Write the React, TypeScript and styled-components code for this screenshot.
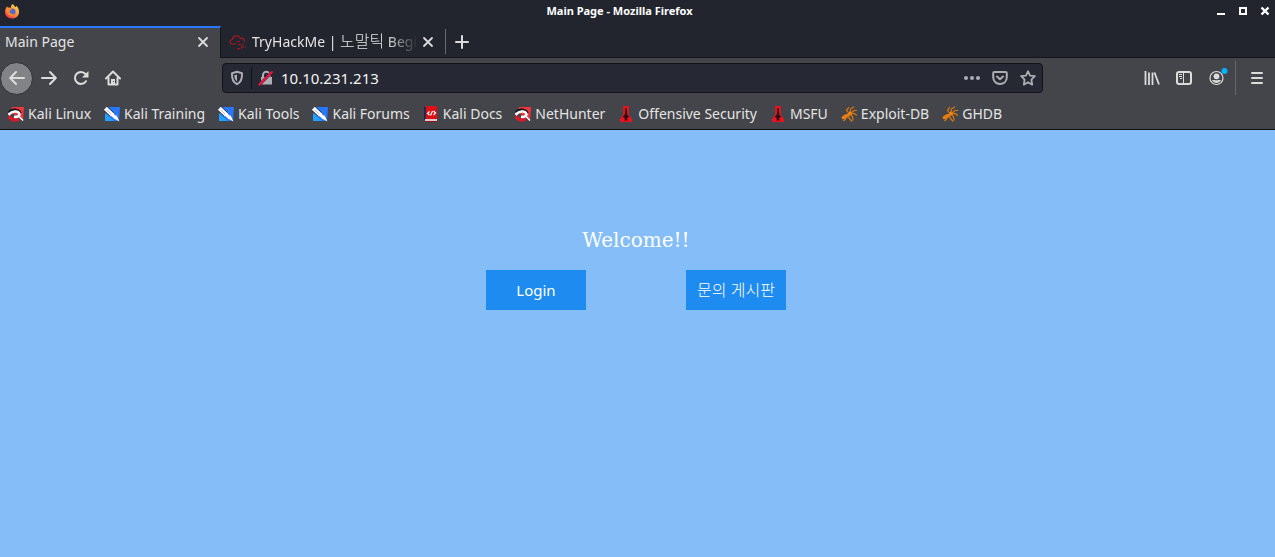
import React from 'react';
import styled, { createGlobalStyle } from 'styled-components';

const Global = createGlobalStyle`
  * { box-sizing: border-box; }
  html, body, #root { height: 100%; }
  body { margin: 0; background: #84bdf7; font-family: 'Noto Sans', 'Noto Sans CJK KR', sans-serif; }
  button, input { font-family: inherit; margin: 0; padding: 0; border: 0; background: none; color: inherit; }
  svg { display: block; flex: none; }
`;

const Window = styled.div`
  min-height: 100%;
  display: flex;
  flex-direction: column;
  color: #e4e4e2;
  font-size: 14px;
  line-height: 20px;
`;

const TitleBar = styled.header`
  height: 25px;
  display: flex;
  align-items: center;
  padding: 0 2px 3px 4px;
  background: #23252e;
`;

const Title = styled.h1`
  flex: 1;
  margin: 0;
  padding-left: 6px;
  text-align: center;
  font-size: 11px;
  line-height: 16px;
  font-weight: 700;
  color: #ffffff;
`;

const WindowControls = styled.div`
  display: flex;
  gap: 6px;
`;

const IconButton = styled.button<{ $size?: number }>`
  width: ${(p) => p.$size ?? 16}px;
  height: ${(p) => p.$size ?? 16}px;
  flex: none;
  display: grid;
  place-items: center;
`;

const TabStrip = styled.div`
  display: flex;
  height: 33px;
  padding-top: 1px;
  background: #23252e;
  border-bottom: 1px solid #14151a;
`;

const Tab = styled.div<{ $active?: boolean }>`
  display: flex;
  align-items: center;
  width: ${(p) => (p.$active ? 221 : 224)}px;
  flex: none;
  padding: 0 9px 2px ${(p) => (p.$active ? 5 : 8)}px;
  border-top: 2px solid ${(p) => (p.$active ? '#2777ff' : 'transparent')};
  border-right: ${(p) => (p.$active ? '1px solid #14151a' : '0')};
  background: ${(p) => (p.$active ? '#43454b' : 'transparent')};
  margin-bottom: ${(p) => (p.$active ? -1 : 0)}px;
`;

const TabLabel = styled.span<{ $faded?: boolean }>`
  flex: 1;
  min-width: 0;
  overflow: hidden;
  white-space: nowrap;
  margin-left: ${(p) => (p.$faded ? 6 : 0)}px;
  margin-right: ${(p) => (p.$faded ? 2 : 0)}px;
  mask-image: ${(p) => (p.$faded ? 'linear-gradient(to left, transparent, #000 32px)' : 'none')};
`;

const Hangul = styled.span`
  font-size: 16px;
  font-weight: 300;
`;

const NewTab = styled.div`
  display: flex;
  align-items: center;
  padding-left: 8px;
  margin: 3px 0;
  border-left: 1px solid #66686e;
`;

const Toolbar = styled.nav`
  height: 40px;
  display: flex;
  align-items: center;
  background: #43454b;
  padding-right: 10px;
`;

const NavButtons = styled.div`
  flex: none;
  display: flex;
  align-items: center;
  width: 222px;
  gap: 16px;
`;

const BackButton = styled(IconButton)`
  width: 33px;
  height: 33px;
  border-radius: 50%;
  background: #828386;
  border: 1px solid #2f3137;
  margin-right: -8px;
`;

const AddressBar = styled.div`
  flex: 1;
  max-width: 821px;
  height: 30px;
  display: flex;
  align-items: center;
  padding: 0 6px;
  border: 1px solid #121318;
  border-radius: 4px;
  background: #262833;
`;

const Divider = styled.span<{ $tone: string; $height: number }>`
  width: 1px;
  height: ${(p) => p.$height}px;
  background: ${(p) => p.$tone};
`;

const Address = styled.input`
  flex: 1;
  min-width: 0;
  font-size: 15px;
  line-height: 20px;
  color: #f4f4f4;
  outline: none;
`;

const AddressGroup = styled.div`
  display: flex;
  align-items: center;
  gap: 6px;
  margin-right: 7px;
`;

const AddressActions = styled.div`
  display: flex;
  gap: 12px;
`;

const ToolActions = styled.div`
  display: flex;
  align-items: center;
  gap: 16px;
  margin-left: auto;
`;

const MenuArea = styled.div`
  display: flex;
  align-items: center;
  gap: 13px;
  margin-left: -9px;
`;

const Bookmarks = styled.div`
  height: 32px;
  display: flex;
  align-items: center;
  gap: 13px;
  padding-left: 8px;
  background: #43454b;
  border-bottom: 1px solid #0f1014;
`;

const Bookmark = styled.a`
  display: flex;
  align-items: center;
  gap: 4px;
  color: inherit;
  text-decoration: none;
  white-space: nowrap;
`;

const Page = styled.main`
  flex: 1;
  display: flex;
  flex-direction: column;
  align-items: center;
  gap: 18px;
  padding: 98px 3px 0 0;
  background: #84bdf7;
  color: #ffffff;
`;

const Welcome = styled.p`
  margin: 0;
  font-family: 'DejaVu Serif', serif;
  font-size: 20px;
  line-height: 24px;
`;

const Choices = styled.div`
  display: flex;
  gap: 100px;
`;

const Choice = styled.button`
  width: 100px;
  height: 40px;
  && { background: #1e8bf0; }
  font-size: 15px;
  line-height: 20px;
  white-space: nowrap;
`;

const Svg = ({ children, w = 16, h = 16 }: { children: React.ReactNode; w?: number; h?: number }) => (
  <svg width={w} height={h} viewBox={`0 0 ${w} ${h}`} fill="none" aria-hidden="true">
    {children}
  </svg>
);

const line = { stroke: '#dcdcdb', strokeWidth: 2, strokeLinecap: 'round', strokeLinejoin: 'round' } as const;
const soft = { ...line, stroke: '#adaeb3' } as const;

const CloseIcon = () => <Svg><path {...line} strokeWidth={1.8} d="M4 4l8 8M12 4l-8 8" /></Svg>;

const FirefoxIcon = () => (
  <Svg>
    <defs>
      <linearGradient id="flame" x1="13" y1="1" x2="3" y2="15" gradientUnits="userSpaceOnUse">
        <stop offset="0" stopColor="#ffe04b" />
        <stop offset=".5" stopColor="#ff9433" />
        <stop offset="1" stopColor="#f52e4f" />
      </linearGradient>
    </defs>
    <path fill="url(#flame)" d="M8.3 1c1.6.8 2.4 2 2.8 3 .7.1 1.2-.4 1.2-1.2C14.500 4.700 15 7 15 9c0 4-3 6.500-6.800 6.500C4 15.500 1 12.600 1 9c0-2.200.7-4.300 2.300-5.800 0 .7.300 1.200.700 1.500C5.200 4.500 6 4.500 7 5c0-1.500.3-3 1.300-4z" />
    <circle cx="8.2" cy="8.800" r="3.300" fill="#5366d6" />
    <path fill="#ff8a2a" d="M2.500 6.500C4 5.200 5.800 5 7.800 6.300c-.2 1-1.200 1.100-2.200 1.300-.2 2.800 2 4.200 4.600 3.200-1 1.800-3.200 2.200-5 1.200C3.200 11 2.200 9 2.500 6.500z" />
  </Svg>
);

const CloudIcon = () => (
  <Svg w={17}>
    <path stroke="#a71920" strokeWidth="1.200" d="M7 10H3.500C.3 9.600.3 5.800 3.300 5.500 4 1 10 .5 11.300 4.300c3-.5 4.700 1.200 4.200 3.700M7.500 7.500H11" />
    <path stroke="#8e1a20" strokeWidth="1.500" strokeDasharray="3 1" d="M9 10.500h6M12 13h5M8 14.700h5" />
  </Svg>
);

const Magnet = () => (
  <Svg>
    <path fill="#f2353d" d="M4 1h12l-1 13-4-3L2 6z" />
    <path stroke="#17181c" strokeWidth="3.600" d="M1 6.500C5 3 10.500 3.500 12 7.500" />
    <path stroke="#d51a2b" strokeWidth="3.600" d="M1 9.500c1 4.500 5 5.300 10 3.500" />
    <path stroke="#fff" strokeWidth="2.600" d="M.5 8.800C4 4.800 10 4.500 11.300 7.800c.7 2.400-2.300 3.400-5.300 2.900" />
    <path stroke="#fff" strokeWidth="1.600" d="M10.500 10l4.500 4.500" />
  </Svg>
);

const Knife = () => (
  <Svg>
    <path fill="#2777ff" d="M3 1h13l-1 14H1z" />
    <path fill="#20a0ff" d="M1 7l9 8H1z" />
    <path stroke="#20222a" strokeWidth="5.600" d="M1.500 2.500l6.500 6" />
    <path stroke="#fff" strokeWidth="4.400" d="M1.300 2.300L8.500 9" />
    <path stroke="#fff" strokeWidth="3" d="M8 8.500l4 3.500" />
    <path fill="#fff" d="M9.500 12.300l3-3L15.500 15.500z" />
    <path stroke="#8a929e" strokeWidth=".6" d="M2.500 4l4.500 4" />
  </Svg>
);

const Book = () => (
  <Svg>
    <path fill="#e00f16" d="M2 1l2-1h10v13l-1 1H2z" />
    <path fill="#1d2b4a" d="M1 1h2v13H1z" />
    <path fill="#d9cbcb" d="M2 13h12v2H2z" />
    <path fill="#9c1018" d="M2 15h12v1H2z" />
    <path stroke="#fff" strokeWidth="1.200" d="M6.500 5.500l-2 2 2 1.500M9.500 5l-2 4.500M10.500 5l2 2-2 2" />
  </Svg>
);

const Spire = () => (
  <Svg>
    <path fill="#e8141f" d="M5 0h6l-.3 8.500L14 13v3H2v-3l3.300-4.500z" />
    <path fill="#310c10" d="M7.500 2h1.200l.6 7 2.200 2-2 .5-.3 4-1.200-2-1.200 2-.3-4-2-.5 2.200-2z" />
  </Svg>
);

const Bug = () => (
  <Svg>
    <ellipse cx="4.500" cy="10.500" rx="4.300" ry="2" transform="rotate(-28 4.500 10.500)" fill="#e77d12" />
    <circle cx="9" cy="7.500" r="1.900" fill="#f38816" />
    <path stroke="#df780e" strokeWidth="1.200" d="M7.500 7L5.500 4.300 8 1M9 6.500L9.500 3 13 .8M10 7l3-2.500h3M10 8l3-.5 3 2M9 8.500l2.500 2 .5 4M7.500 9l.5 3 3 3.500M5 10l-.5 3-2 2" />
  </Svg>
);

const bookmarks: [string, () => React.JSX.Element][] = [
  ['Kali Linux', Magnet],
  ['Kali Training', Knife],
  ['Kali Tools', Knife],
  ['Kali Forums', Knife],
  ['Kali Docs', Book],
  ['NetHunter', Magnet],
  ['Offensive Security', Spire],
  ['MSFU', Spire],
  ['Exploit-DB', Bug],
  ['GHDB', Bug],
];

export default function App() {
  return (
    <Window>
      <Global />
      <TitleBar>
        <FirefoxIcon />
        <Title>Main Page - Mozilla Firefox</Title>
        <WindowControls>
          <IconButton aria-label="Minimize"><Svg><path fill="#fff" d="M4 10h8v2H4z" /></Svg></IconButton>
          <IconButton aria-label="Maximize"><Svg><path stroke="#fff" strokeWidth="2" d="M5 5h6v6H5z" /></Svg></IconButton>
          <IconButton aria-label="Close window"><Svg><path stroke="#fff" strokeWidth="2.400" d="M4.500 4.500l7 7M11.500 4.500l-7 7" /></Svg></IconButton>
        </WindowControls>
      </TitleBar>

      <TabStrip>
        <Tab $active>
          <TabLabel>Main Page</TabLabel>
          <IconButton aria-label="Close tab"><CloseIcon /></IconButton>
        </Tab>
        <Tab>
          <CloudIcon />
          <TabLabel $faded>TryHackMe | <Hangul>노말틱</Hangul> Begin</TabLabel>
          <IconButton aria-label="Close tab"><CloseIcon /></IconButton>
        </Tab>
        <NewTab>
          <IconButton aria-label="New tab"><Svg><path {...line} d="M8 2v12M2 8h12" /></Svg></IconButton>
        </NewTab>
      </TabStrip>

      <Toolbar>
        <NavButtons>
          <BackButton aria-label="Back"><Svg><path {...line} d="M15 8H1.500M7 2L1.200 8 7 14" /></Svg></BackButton>
          <IconButton aria-label="Forward"><Svg><path {...line} d="M1 8h13.500M9 2l5.800 6L9 14" /></Svg></IconButton>
          <IconButton aria-label="Reload">
            <Svg>
              <path {...line} d="M13 11.200A6 6 0 1 1 12.500 4" />
              <path fill="#dcdcdb" d="M15.500 1v6.500H9z" />
            </Svg>
          </IconButton>
          <IconButton aria-label="Home">
            <Svg>
              <path {...line} d="M1 8.500L8 1.500l7 7M3.500 8v6.500h9V8" />
              <path fill="#dcdcdb" d="M6 9h4v5H6z" />
              <path fill="#43454b" d="M8 11h1v1H8z" />
            </Svg>
          </IconButton>
        </NavButtons>

        <AddressBar>
          <AddressGroup>
            <IconButton aria-label="Tracking protection">
              <Svg>
                <path {...soft} d="M8 1.800l5 1.400c.3 5.300-1 9-5 11-4-2-5.300-5.700-5-11z" />
                <path fill="#adaeb3" d="M8 4.500v7C6.200 10 5.300 8 5.300 5.200z" />
              </Svg>
            </IconButton>
            <Divider $tone="#101116" $height={22} />
            <IconButton aria-label="Connection is not secure">
              <Svg>
                <path fill="#adaeb3" d="M3 7h11v7.500H3z" />
                <path stroke="#adaeb3" strokeWidth="2" d="M5 8V5a3.300 3.300 0 0 1 6.600 0v3" />
                <path stroke="#262833" strokeWidth="3" d="M1 15L14.500 1.500" />
                <path stroke="#ff0f43" strokeWidth="2" strokeLinecap="round" d="M1.500 14.500L14 2" />
              </Svg>
            </IconButton>
          </AddressGroup>
          <Address aria-label="Address" defaultValue="10.10.231.213" />
          <AddressActions>
            <IconButton aria-label="Page actions">
              <Svg><g fill="#adaeb3"><circle cx="2" cy="8" r="2" /><circle cx="8" cy="8" r="2" /><circle cx="14" cy="8" r="2" /></g></Svg>
            </IconButton>
            <IconButton aria-label="Save to Pocket">
              <Svg><path {...soft} d="M2.500 2h11c.8 0 1.300.5 1.300 1.300V7c0 9.200-13.600 9.200-13.600 0V3.300C1.200 2.500 1.700 2 2.500 2zM5 6.500l3 2.800 3-2.800" /></Svg>
            </IconButton>
            <IconButton aria-label="Bookmark this page">
              <Svg><path {...soft} strokeWidth={1.800} d="M8 1.200l2 4.400 4.900.6-3.500 3.400.8 5L8 12.300l-4.200 2.300.8-5L1.100 6.200 6 5.600z" /></Svg>
            </IconButton>
          </AddressActions>
        </AddressBar>

        <ToolActions>
          <IconButton aria-label="Library">
            <Svg><path stroke="#dcdcdb" strokeWidth="1.800" d="M1.500 1v14M5 2.500V15M8.500 2.500V15M10.500 2.500L15 14.500" /></Svg>
          </IconButton>
          <IconButton aria-label="Sidebars">
            <Svg>
              <rect x="1" y="2" width="14" height="12" rx="2" stroke="#dcdcdb" strokeWidth="2" />
              <path stroke="#dcdcdb" d="M7.500 2v12M3 4.500h3M3 6.500h3M4 8.500h2" />
            </Svg>
          </IconButton>
          <IconButton aria-label="Account" $size={20}>
            <Svg w={20} h={20}>
              <circle cx="8.500" cy="10" r="6.500" stroke="#dcdcdb" strokeWidth="1.200" />
              <circle cx="8.500" cy="8.300" r="2.900" fill="#dcdcdb" />
              <path fill="#dcdcdb" d="M4 12c2 .2 7 .2 9 0-1.500 4-7.500 4-9 0z" />
              <circle cx="16.500" cy="3" r="3" fill="#00b3ff" />
            </Svg>
          </IconButton>
          <MenuArea>
            <Divider $tone="#65676c" $height={34} />
            <IconButton aria-label="Menu"><Svg><path {...line} d="M3 3h10M3 8h10M3 13h10" /></Svg></IconButton>
          </MenuArea>
        </ToolActions>
      </Toolbar>

      <Bookmarks>
        {bookmarks.map(([name, Icon]) => (
          <Bookmark href="#" key={name}><Icon />{name}</Bookmark>
        ))}
      </Bookmarks>

      <Page>
        <Welcome>Welcome!!</Welcome>
        <Choices>
          <Choice>Login</Choice>
          <Choice><Hangul>문의 게시판</Hangul></Choice>
        </Choices>
      </Page>
    </Window>
  );
}
